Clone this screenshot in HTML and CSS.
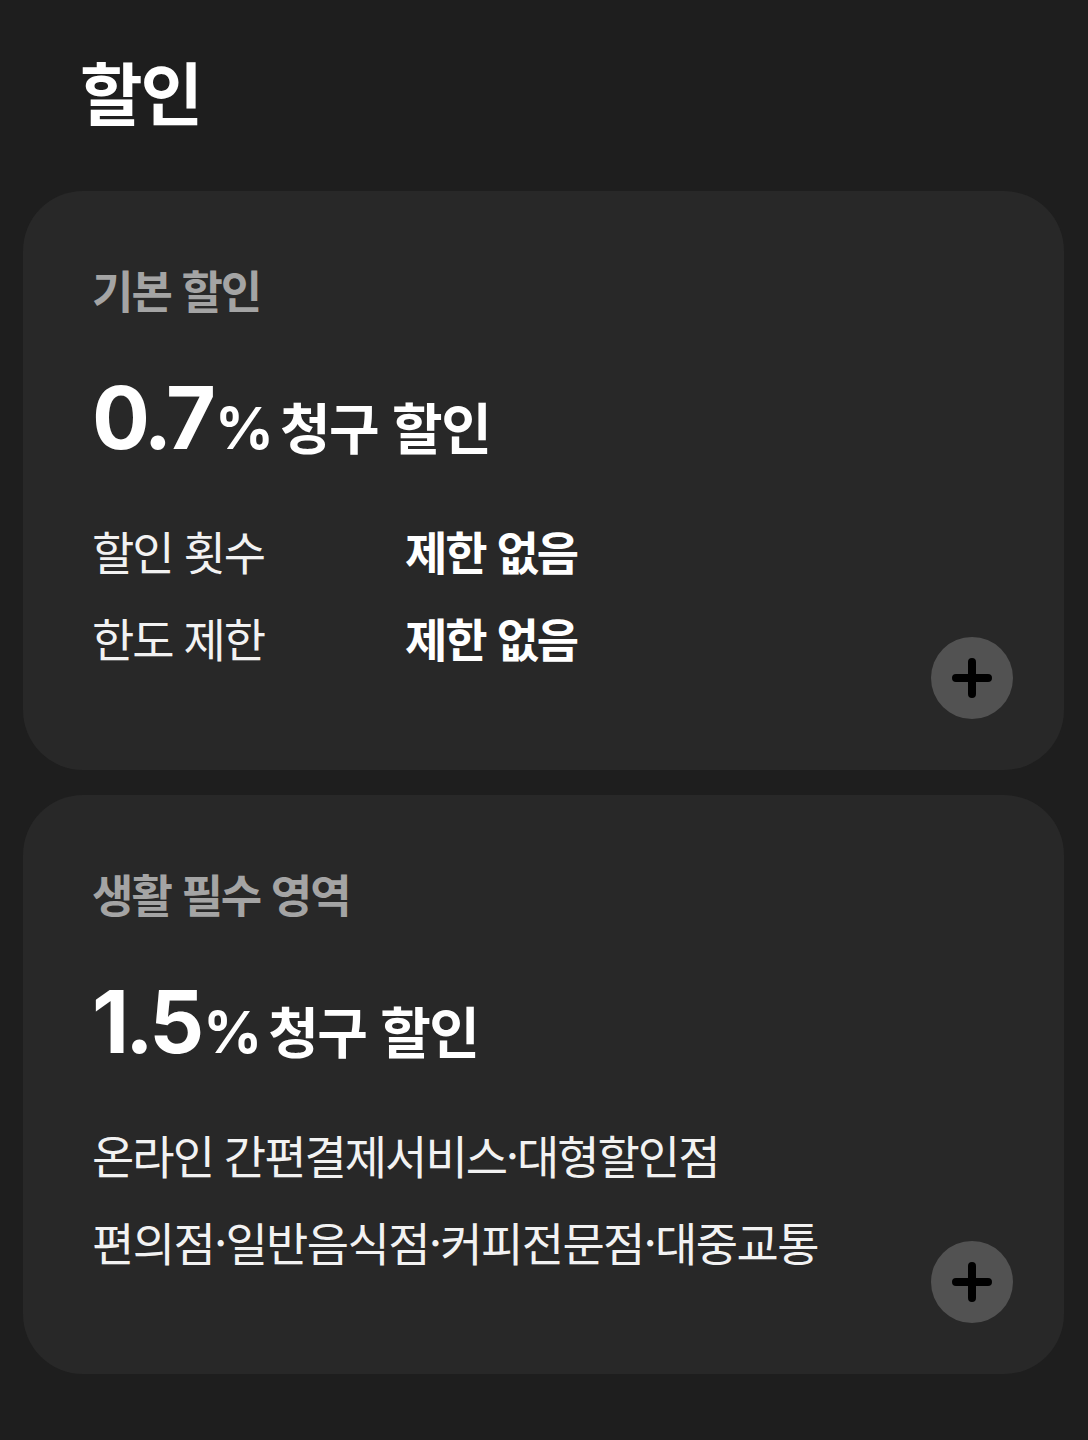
FILE: index.html
```html
<!DOCTYPE html>
<html lang="ko">
<head>
<meta charset="utf-8">
<link rel="stylesheet" href="styles.css">
</head>
<body>
<main class="page">
  <h1 class="title">할인</h1>

  <section class="card">
    <h2 class="label">기본 할인</h2>
    <div class="rate"><span class="num">0.7</span><span class="pct">%</span><span class="unit">청구 할인</span></div>
    <dl class="rows">
      <dt>할인 횟수</dt><dd>제한 없음</dd>
      <dt>한도 제한</dt><dd>제한 없음</dd>
    </dl>
    <button class="plus" aria-label="더보기">
      <svg width="44" height="44" viewBox="0 0 44 44"><path d="M22 6V38M6 22H38" stroke="#000" stroke-width="8" stroke-linecap="round" fill="none"/></svg>
    </button>
  </section>

  <section class="card">
    <h2 class="label">생활 필수 영역</h2>
    <div class="rate"><span class="num">1.5</span><span class="pct">%</span><span class="unit">청구 할인</span></div>
    <div class="lines">
      <p class="line">온라인 간편결제서비스·대형할인점</p>
      <p class="line line-wide">편의점·일반음식점·커피전문점·대중교통</p>
    </div>
    <button class="plus" aria-label="더보기">
      <svg width="44" height="44" viewBox="0 0 44 44"><path d="M22 6V38M6 22H38" stroke="#000" stroke-width="8" stroke-linecap="round" fill="none"/></svg>
    </button>
  </section>
</main>
</body>
</html>
```

FILE: styles.css
```css
html, body {
  margin: 0;
  padding: 0;
  background: #1e1e1e;
}

body {
  font-family: "Noto Sans CJK KR", "Noto Sans", sans-serif;
  color: #fff;
}

.page {
  padding: 57px 24px 40px 23px;
  display: flex;
  flex-direction: column;
}

.title {
  margin: 0 0 66px 57px;
  font-size: 68px;
  line-height: 1;
  font-weight: 700;
  letter-spacing: -2px;
  color: #fff;
}

.card {
  position: relative;
  background: #282828;
  border-radius: 60px;
  padding: 76px 70px 110px 69px;
  margin-bottom: 25px;
}

.label {
  margin: 0;
  font-size: 45px;
  line-height: 1;
  font-weight: 700;
  color: #a4a4a4;
  letter-spacing: -2px;
}

.rate {
  margin-top: 57px;
  height: 86px;
  font-size: 86px;
  line-height: 1;
  font-weight: 700;
  color: #fff;
  white-space: nowrap;
}

.num {
  font-family: Inter, "Noto Sans", sans-serif;
  letter-spacing: -4px;
  line-height: 0;
}

.pct {
  font-family: Inter, "Noto Sans", sans-serif;
  font-size: 58px;
  line-height: 0;
  margin-left: 3px;
  margin-right: 6px;
}

.unit {
  font-size: 55px;
  line-height: 0;
  letter-spacing: -1.5px;
}

.rows {
  margin: 72px 0 0 0;
  display: grid;
  grid-template-columns: 313px auto;
  row-gap: 41px;
}

.rows dt, .rows dd {
  margin: 0;
  font-size: 46px;
  line-height: 1;
  letter-spacing: -2px;
}

.rows dt {
  font-weight: 400;
  color: #f2f2f2;
}

.rows dd {
  font-weight: 700;
  color: #fff;
}

.lines {
  margin-top: 72px;
  display: flex;
  flex-direction: column;
  gap: 41px;
}

.line {
  margin: 0;
  font-size: 46px;
  line-height: 1;
  letter-spacing: -2px;
  color: #f2f2f2;
}

.line-wide {
  letter-spacing: -1.6px;
}

.plus {
  position: absolute;
  right: 51px;
  bottom: 51px;
  width: 82px;
  height: 82px;
  border: none;
  border-radius: 50%;
  background: #525252;
  padding: 0;
  display: flex;
  align-items: center;
  justify-content: center;
}
```
